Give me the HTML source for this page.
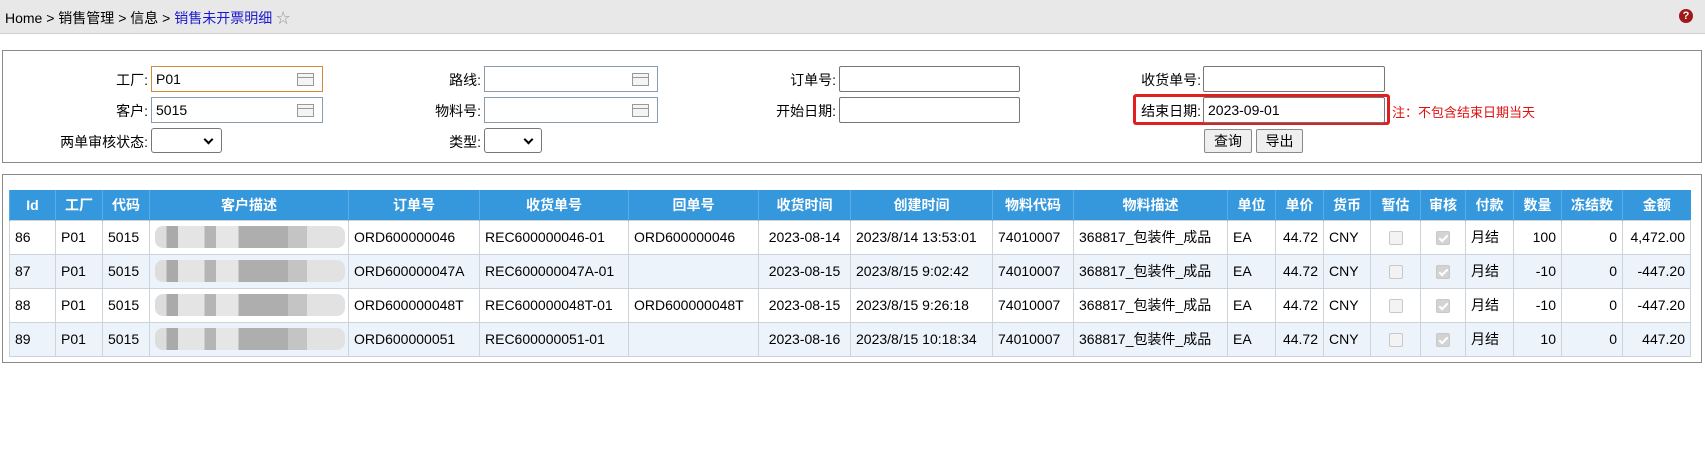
<!DOCTYPE html>
<html><head><meta charset="utf-8"><style>
*{box-sizing:border-box}
body{margin:0;width:1705px;height:465px;background:#fff;font-family:"Liberation Sans","Noto Sans CJK SC",sans-serif;font-size:14px;color:#000;position:relative;overflow:hidden}
.bar{position:absolute;left:0;top:0;width:1705px;height:34px;background:#e8e8e8;border-bottom:1px solid #cfcfcf}
.crumb{position:absolute;left:5px;top:8px;font-size:14px}
.crumb .cur{color:#1a1acc}
.help{position:absolute;right:12px;top:9px;width:14px;height:14px;border-radius:50%;background:#a01818;color:#fff;font-size:11px;font-weight:bold;text-align:center;line-height:14px}
.box{position:absolute;left:2px;border:1px solid #8a8a8a;width:1700px}
.lbl{position:absolute;text-align:right;font-size:14px}
.inp{position:absolute;height:26px;border:1px solid #8a9bb0;background:#fff;padding-left:4px;line-height:24px;font-size:14px}
.inp.plain{border-color:#767676;border-radius:2px}
.ic{position:absolute;right:8px;top:6px;width:17px;height:13px;border:1px solid #999;background:linear-gradient(#999,#999) 0 3px/100% 1px no-repeat,#f4f4f4}
.sel{position:absolute;height:25px;border:1px solid #767676;border-radius:3px;background:#fff}
.sel:after{content:"";position:absolute;right:9px;top:7px;width:5px;height:5px;border-right:2px solid #000;border-bottom:2px solid #000;transform:rotate(45deg)}
.btn{position:absolute;height:24px;border:1px solid #8a8a8a;border-radius:2px;background:#efefef;text-align:center;line-height:22px;font-size:14px}
table{position:absolute;left:9px;top:190px;border-collapse:collapse;width:1681px;table-layout:fixed}
th{background:#3598dc;color:#fff;font-weight:bold;height:30px;font-size:14px;border-left:1px solid #5aaee6;padding:0}
td{height:34px;border:1px solid #cdd3da;padding:0 5px;white-space:nowrap;overflow:hidden;font-size:14px}
tr.alt td{background:#edf3fb}
.r{text-align:right}.c{text-align:center}
.cb{display:inline-block;width:14px;height:14px;border:1px solid #c8c8c8;border-radius:2px;background:#f3f3f3;vertical-align:middle}
.cb.k{background:#d3d3d3;position:relative}
.cb.k:after{content:"";position:absolute;left:4px;top:1px;width:3px;height:7px;border-right:2px solid #fff;border-bottom:2px solid #fff;transform:rotate(45deg)}
.blur{display:inline-block;width:190px;height:22px;vertical-align:middle;border-radius:8px;background:linear-gradient(90deg,#ddd 0,#ddd 6%,#aaa 6%,#aaa 12%,#e4e4e4 12%,#e4e4e4 26%,#b5b5b5 26%,#b5b5b5 32%,#e6e6e6 32%,#e6e6e6 44%,#aeaeae 44%,#aeaeae 70%,#c4c4c4 70%,#c4c4c4 80%,#e2e2e2 80%)}
</style></head><body>
<div class="bar"><div class="crumb">Home &gt; 销售管理 &gt; 信息 &gt; <span class="cur">销售未开票明细</span> <span style="color:#999">☆</span></div><div class="help">?</div></div>

<div class="box" style="top:50px;height:113px"></div>
<div class="lbl" style="left:40px;width:108px;top:70px">工厂:</div>
<div class="inp" style="left:151px;top:66px;width:172px;border-color:#d08a3a">P01<span class="ic"></span></div>
<div class="lbl" style="left:40px;width:108px;top:101px">客户:</div>
<div class="inp" style="left:151px;top:97px;width:172px">5015<span class="ic"></span></div>
<div class="lbl" style="left:20px;width:128px;top:132px">两单审核状态:</div>
<div class="sel" style="left:151px;top:128px;width:71px"></div>

<div class="lbl" style="left:380px;width:101px;top:70px">路线:</div>
<div class="inp" style="left:484px;top:66px;width:174px"><span class="ic"></span></div>
<div class="lbl" style="left:380px;width:101px;top:101px">物料号:</div>
<div class="inp" style="left:484px;top:97px;width:174px"><span class="ic"></span></div>
<div class="lbl" style="left:380px;width:101px;top:132px">类型:</div>
<div class="sel" style="left:484px;top:128px;width:58px"></div>

<div class="lbl" style="left:720px;width:116px;top:70px">订单号:</div>
<div class="inp plain" style="left:839px;top:66px;width:181px"></div>
<div class="lbl" style="left:720px;width:116px;top:101px">开始日期:</div>
<div class="inp plain" style="left:839px;top:97px;width:181px"></div>

<div class="lbl" style="left:1100px;width:101px;top:70px">收货单号:</div>
<div class="inp plain" style="left:1203px;top:66px;width:182px"></div>
<div style="position:absolute;left:1133px;top:94px;width:257px;height:31px;border:3px solid #e02020;border-radius:3px"></div>
<div class="lbl" style="left:1100px;width:101px;top:101px">结束日期:</div>
<div class="inp plain" style="left:1203px;top:97px;width:182px">2023-09-01</div>
<div style="position:absolute;left:1392px;top:102px;color:#e01010;font-size:13px">注：不包含结束日期当天</div>
<div class="btn" style="left:1204px;top:129px;width:48px">查询</div>
<div class="btn" style="left:1256px;top:129px;width:47px">导出</div>

<div class="box" style="top:174px;height:189px"></div>
<table>
<colgroup><col style="width:46px"><col style="width:47px"><col style="width:47px"><col style="width:199px"><col style="width:131px"><col style="width:149px"><col style="width:130px"><col style="width:92px"><col style="width:142px"><col style="width:81px"><col style="width:154px"><col style="width:48px"><col style="width:48px"><col style="width:47px"><col style="width:50px"><col style="width:45px"><col style="width:48px"><col style="width:48px"><col style="width:61px"><col style="width:68px"></colgroup>
<tr><th>Id</th><th>工厂</th><th>代码</th><th>客户描述</th><th>订单号</th><th>收货单号</th><th>回单号</th><th>收货时间</th><th>创建时间</th><th>物料代码</th><th>物料描述</th><th>单位</th><th>单价</th><th>货币</th><th>暂估</th><th>审核</th><th>付款</th><th>数量</th><th>冻结数</th><th>金额</th></tr>
<tr><td>86</td><td>P01</td><td>5015</td><td><span class="blur"></span></td><td>ORD600000046</td><td>REC600000046-01</td><td>ORD600000046</td><td class="c">2023-08-14</td><td>2023/8/14 13:53:01</td><td>74010007</td><td>368817_包装件_成品</td><td>EA</td><td class="r">44.72</td><td>CNY</td><td class="c"><span class="cb"></span></td><td class="c"><span class="cb k"></span></td><td>月结</td><td class="r">100</td><td class="r">0</td><td class="r">4,472.00</td></tr>
<tr class="alt"><td>87</td><td>P01</td><td>5015</td><td><span class="blur"></span></td><td>ORD600000047A</td><td>REC600000047A-01</td><td></td><td class="c">2023-08-15</td><td>2023/8/15 9:02:42</td><td>74010007</td><td>368817_包装件_成品</td><td>EA</td><td class="r">44.72</td><td>CNY</td><td class="c"><span class="cb"></span></td><td class="c"><span class="cb k"></span></td><td>月结</td><td class="r">-10</td><td class="r">0</td><td class="r">-447.20</td></tr>
<tr><td>88</td><td>P01</td><td>5015</td><td><span class="blur"></span></td><td>ORD600000048T</td><td>REC600000048T-01</td><td>ORD600000048T</td><td class="c">2023-08-15</td><td>2023/8/15 9:26:18</td><td>74010007</td><td>368817_包装件_成品</td><td>EA</td><td class="r">44.72</td><td>CNY</td><td class="c"><span class="cb"></span></td><td class="c"><span class="cb k"></span></td><td>月结</td><td class="r">-10</td><td class="r">0</td><td class="r">-447.20</td></tr>
<tr class="alt"><td>89</td><td>P01</td><td>5015</td><td><span class="blur"></span></td><td>ORD600000051</td><td>REC600000051-01</td><td></td><td class="c">2023-08-16</td><td>2023/8/15 10:18:34</td><td>74010007</td><td>368817_包装件_成品</td><td>EA</td><td class="r">44.72</td><td>CNY</td><td class="c"><span class="cb"></span></td><td class="c"><span class="cb k"></span></td><td>月结</td><td class="r">10</td><td class="r">0</td><td class="r">447.20</td></tr>
</table>
</body></html>
